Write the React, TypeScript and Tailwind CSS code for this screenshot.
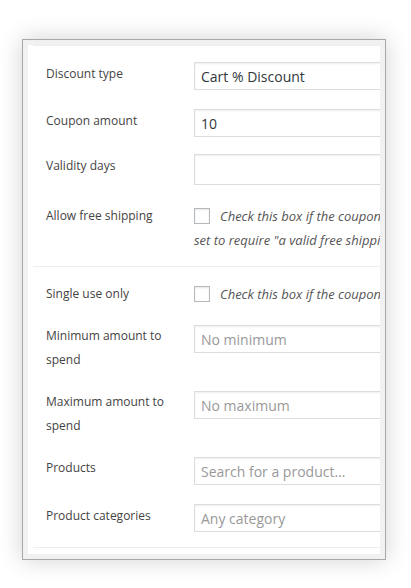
import type { ReactNode } from "react";

const font = { fontFamily: '"Open Sans", "Noto Sans", sans-serif' };

const Label = ({ children }: { children: ReactNode }) => (
  <div className="w-[166px] shrink-0 pl-[18px] pr-[24px] text-[12px] leading-6 text-[#444]">{children}</div>
);

const Input = ({ value, placeholder, tall }: { value?: string; placeholder?: string; tall?: boolean }) => (
  <div
    className={`w-[260px] shrink-0 border border-[#ddd] bg-white pl-[6px] flex items-center text-[14px] shadow-[inset_0_1px_2px_rgba(0,0,0,0.07)] ${
      tall ? "h-[31px]" : "h-[28px]"
    } ${value ? "text-[#32373c]" : "text-[#999]"}`}
  >
    {value ?? placeholder}
  </div>
);

const Checkbox = () => (
  <span className="inline-block w-4 h-4 border border-[#b4b9be] bg-white align-[-3px] mr-[10px] shadow-[inset_0_1px_2px_rgba(0,0,0,0.1)]" />
);

const Separator = () => <div className="ml-[5px] h-px bg-[#eee]" />;

export default function App() {
  return (
    <div className="min-h-screen bg-white pt-[39px] pl-[22px]" style={font}>
      <div className="w-[364px] h-[521px] border border-[#a8a8a8] bg-[#f1f1f1] p-[5px] shadow-[0_0_22px_rgba(0,0,0,0.18)]">
        <div className="h-full bg-white overflow-hidden">
          <Separator />
          <div className="pt-[16px] pb-[14px]">
            <div className="flex items-start">
              <Label>Discount type</Label>
              <Input value="Cart % Discount" />
            </div>
            <div className="flex items-start mt-[19px]">
              <Label>Coupon amount</Label>
              <Input value="10" />
            </div>
            <div className="flex items-start mt-[17px]">
              <Label>Validity days</Label>
              <Input tall />
            </div>
            <div className="flex items-start mt-[19px]">
              <Label>Allow free shipping</Label>
              <div className="w-[260px] shrink-0 text-[13px] leading-6 italic text-[#555] whitespace-nowrap">
                <Checkbox />
                Check this box if the coupon grants free shipping. A free shipping method must be enabled in your shipping zone and be
                <br />
                set to require "a valid free shipping coupon"
              </div>
            </div>
          </div>
          <Separator />
          <div className="pt-[15px] pb-[15px]">
            <div className="flex items-start">
              <Label>Single use only</Label>
              <div className="w-[260px] shrink-0 text-[13px] leading-6 italic text-[#555] whitespace-nowrap">
                <Checkbox />
                Check this box if the coupon cannot be used in conjunction with other coupons.
              </div>
            </div>
            <div className="flex items-start mt-[18px]">
              <Label>Minimum amount to spend</Label>
              <div className="pt-px">
                <Input placeholder="No minimum" />
              </div>
            </div>
            <div className="flex items-start mt-[18px]">
              <Label>Maximum amount to spend</Label>
              <div className="pt-px">
                <Input placeholder="No maximum" />
              </div>
            </div>
            <div className="flex items-start mt-[18px]">
              <Label>Products</Label>
              <div className="pt-px">
                <Input placeholder="Search for a product…" />
              </div>
            </div>
            <div className="flex items-start mt-[19px]">
              <Label>Product categories</Label>
              <Input placeholder="Any category" />
            </div>
          </div>
          <Separator />
        </div>
      </div>
    </div>
  );
}
